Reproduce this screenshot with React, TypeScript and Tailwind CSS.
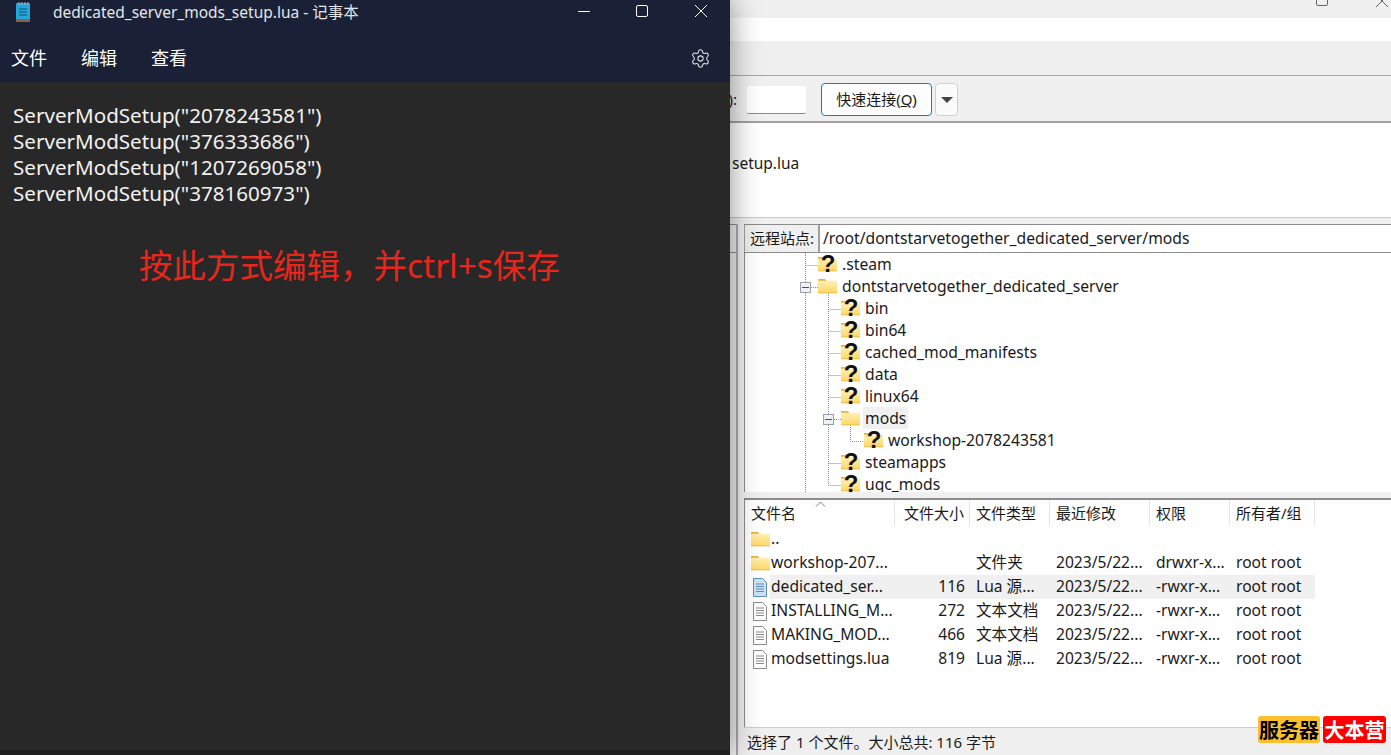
import { Settings } from 'lucide-react';

const ui = 'font-["Noto_Sans","Noto_Sans_CJK_SC",sans-serif]';

const treeRows = [
  { name: '.steam', level: 0, icon: 'unknown' },
  { name: 'dontstarvetogether_dedicated_server', level: 0, icon: 'folder' },
  { name: 'bin', level: 1, icon: 'unknown' },
  { name: 'bin64', level: 1, icon: 'unknown' },
  { name: 'cached_mod_manifests', level: 1, icon: 'unknown' },
  { name: 'data', level: 1, icon: 'unknown' },
  { name: 'linux64', level: 1, icon: 'unknown' },
  { name: 'mods', level: 1, icon: 'folder', active: true },
  { name: 'workshop-2078243581', level: 2, icon: 'unknown' },
  { name: 'steamapps', level: 1, icon: 'unknown' },
  { name: 'ugc_mods', level: 1, icon: 'unknown' },
];

const files = [
  { name: '..', size: '', type: '', date: '', perm: '', owner: '', icon: 'folder' },
  { name: 'workshop-207...', size: '', type: '文件夹', date: '2023/5/22...', perm: 'drwxr-x...', owner: 'root root', icon: 'folder' },
  { name: 'dedicated_ser...', size: '116', type: 'Lua 源...', date: '2023/5/22...', perm: '-rwxr-x...', owner: 'root root', icon: 'lua', selected: true },
  { name: 'INSTALLING_M...', size: '272', type: '文本文档', date: '2023/5/22...', perm: '-rwxr-x...', owner: 'root root', icon: 'text' },
  { name: 'MAKING_MOD...', size: '466', type: '文本文档', date: '2023/5/22...', perm: '-rwxr-x...', owner: 'root root', icon: 'text' },
  { name: 'modsettings.lua', size: '819', type: 'Lua 源...', date: '2023/5/22...', perm: '-rwxr-x...', owner: 'root root', icon: 'plain' },
];

function NotepadIcon() {
  return (
    <svg width="18" height="22" viewBox="0 0 18 22">
      <rect x="2" y="2" width="14" height="18" rx="1" fill="#27a7d8" />
      <rect x="2" y="18" width="14" height="3" fill="#8a6242" />
      <path d="M5 1v3M8 1v3M11 1v3M14 1v3" stroke="#9fb4c4" strokeWidth="1" />
      <path d="M5 8h8M5 11h8M5 14h8" stroke="#0f4f7a" strokeWidth="1.2" />
    </svg>
  );
}

function FolderIcon({ size = 19 }: { size?: number }) {
  return (
    <svg width={size} height={size * 0.8} viewBox="0 0 20 16">
      <defs>
        <linearGradient id="folderBody" x1="0" y1="0" x2="0" y2="1">
          <stop offset="0" stopColor="#fff3bd" />
          <stop offset="1" stopColor="#ffd766" />
        </linearGradient>
      </defs>
      <path d="M0 1h7l2 2h11v13H0z" fill="url(#folderBody)" />
      <path d="M0 1h7l2 2H0z" fill="#e8b33e" />
      <path d="M0 15h20v1H0z" fill="#eebf52" />
    </svg>
  );
}

function UnknownFolderIcon() {
  return (
    <span className="relative flex h-[22px] w-5 shrink-0 items-center">
      <FolderIcon />
      <span className='absolute inset-0 text-center font-["Liberation_Sans",sans-serif] text-[24px] font-bold leading-[22px] text-[#111]'>?</span>
    </span>
  );
}

function DocIcon({ kind }: { kind: string }) {
  const fill = kind === 'lua' ? '#cfe2f3' : '#ffffff';
  const stroke = kind === 'lua' ? '#5b8db8' : '#8a8a8a';
  return (
    <svg width="16" height="19" viewBox="0 0 16 19">
      <path d="M1.500.5h9l4 4v14h-13z" fill={fill} stroke={stroke} />
      <path d="M4 6h8M4 8.500h8M4 11h8M4 13.500h8" stroke={stroke} strokeWidth="1" />
    </svg>
  );
}

function ExpandBox({ className }: { className: string }) {
  return (
    <span className={`absolute flex h-[11px] w-[11px] items-center justify-center border border-[#9aa3ad] bg-[#eef0f3] ${className}`}>
      <span className="h-px w-[7px] bg-[#4a5563]" />
    </span>
  );
}

function TreeGuides() {
  return (
    <svg className="absolute left-0 top-0" width="140" height="239">
      <g stroke="#8a8a8a" strokeDasharray="1 1" fill="none">
        <path d="M60.500 0V239" />
        <path d="M60.500 12.500H73" />
        <path d="M66 34.500H73" />
        <path d="M83.500 40V232.500" />
        <path d="M83.500 56.500H96M83.500 78.500H96M83.500 100.500H96M83.500 122.500H96M83.500 144.500H96M83.500 210.500H96M83.500 232.500H96" />
        <path d="M89 166.500H96" />
        <path d="M105.500 172V188.500H119" />
      </g>
    </svg>
  );
}

function TreeRow({ row }: { row: (typeof treeRows)[number] }) {
  const indent = ['pl-[73px]', 'pl-[96px]', 'pl-[119px]'][row.level];
  return (
    <div className={`relative flex h-[22px] items-center ${indent}`}>
      {row.icon === 'folder' ? <span className="w-5 shrink-0"><FolderIcon /></span> : <UnknownFolderIcon />}
      <span className={`ml-[2px] px-[2px] leading-[22px] ${row.active ? 'bg-[#f0f0f0]' : ''}`}>{row.name}</span>
    </div>
  );
}

export default function App() {
  return (
    <div className={`flex h-[755px] w-[1391px] overflow-hidden bg-[#f0f0f0] ${ui}`}>
      {/* Notepad window */}
      <div className="relative z-10 flex w-[730px] shrink-0 flex-col bg-[#282828] shadow-[0_0_28px_rgba(0,0,0,0.45)]">
        <div className="flex h-[82px] flex-col bg-[#1a2035] text-white">
          <div className="flex h-[37px] items-start">
            <span className="ml-[14px] mt-px"><NotepadIcon /></span>
            <span className="ml-[21px] mt-[2px] text-[15.500px] leading-[20px] text-[#e4e6ea]">dedicated_server_mods_setup.lua - 记事本</span>
            <div className="ml-auto flex">
              <span className="flex h-[22px] w-[58px] items-center justify-center">
                <span className="h-px w-[12px] bg-white" />
              </span>
              <span className="flex h-[22px] w-[58px] items-center justify-center">
                <span className="h-[12px] w-[12px] rounded-[2px] border border-white" />
              </span>
              <span className="flex h-[22px] w-[59px] items-center justify-center">
                <svg width="14" height="14" viewBox="0 0 14 14"><path d="M1 1l12 12M13 1L1 13" stroke="#fff" strokeWidth="1" /></svg>
              </span>
            </div>
          </div>
          <div className="flex h-[45px] items-center pb-[3px] text-[18px]">
            <span className="ml-[11px]">文件</span>
            <span className="ml-[34px]">编辑</span>
            <span className="ml-[34px]">查看</span>
            <Settings className="ml-auto mr-[19px] h-[21px] w-[21px] text-[#dfe3ea]" strokeWidth={1.2} />
          </div>
        </div>
        <div className="px-[13px] pt-[20px] text-[20.600px] leading-[26px] text-[#f2f2f2]">
          <p>ServerModSetup("2078243581")</p>
          <p>ServerModSetup("376333686")</p>
          <p>ServerModSetup("1207269058")</p>
          <p>ServerModSetup("378160973")</p>
        </div>
        <p className="mt-[35px] pl-[139px] text-[33.500px] leading-[48px] text-[#e8261c]">按此方式编辑，并ctrl+s保存</p>
        <div className="mt-auto h-[5px] bg-[#1f1f1f]" />
      </div>

      {/* FTP client behind it */}
      <div className="relative flex min-w-0 flex-1 flex-col text-[15px] text-[#1a1a1a]">
        <div className="flex h-[18px] items-start overflow-hidden bg-[#f0f0f0]">
          <span className="ml-[586px] mt-[-6px] h-[12px] w-[12px] rounded-[2px] border border-[#666]" />
          <svg className="ml-[47px] mt-[-6px]" width="14" height="14" viewBox="0 0 14 14"><path d="M1 1l12 12M13 1L1 13" stroke="#666" strokeWidth="1" /></svg>
        </div>
        <div className="h-[23px] bg-white" />
        <div className="h-[35px] border-b border-[#a8a8a8] bg-[#efefef]" />
        <div className="flex h-[47px] items-center border-b-2 border-[#a0a0a0] bg-[#f0f0f0] pt-[2px]">
          <span className="ml-[-20px] w-[27px] text-right text-[15px]">(P):</span>
          <span className="ml-[10px] h-[28px] w-[59px] rounded-[2px] border-b border-[#8a8a8a] bg-white" />
          <button className="ml-[15px] h-[33px] w-[111px] rounded-[4px] border border-[#1a7fb0] bg-[#fdfdfd] text-[15px]">快速连接(<span className="underline">Q</span>)</button>
          <button className="ml-[3px] flex h-[33px] w-[23px] items-center justify-center rounded-[4px] border border-[#d0d0d0] bg-[#fbfbfb]">
            <span className="h-0 w-0 border-x-[6px] border-t-[6px] border-x-transparent border-t-[#444]" />
          </button>
        </div>
        <div className="h-[95px] border-b border-[#c8c8c8] bg-white pl-[2px] pt-[30px] text-[15.500px] leading-[20px]">setup.lua</div>

        <div className="flex min-h-0 flex-1 pt-[6px]">
          <div className="flex w-[14px] shrink-0">
            <div className="w-[8px] border-r-2 border-[#a8a8a8] bg-[#f0f0f0]">
              <div className="h-[29px] border-y border-[#8c8c8c]" />
            </div>
            <div className="flex-1 bg-[#f0f0f0]" />
          </div>
          <div className="flex min-w-0 flex-1 flex-col">
            <div className="flex h-[29px] border-y border-[#8c8c8c]">
              <span className="flex w-[75px] items-center border-x border-[#a0a0a0] bg-[#f0f0f0] pl-[5px] text-[15px]">远程站点:</span>
              <span className="flex flex-1 items-center border-l border-[#a0a0a0] bg-white pl-[3px] text-[15.700px]">/root/dontstarvetogether_dedicated_server/mods</span>
            </div>
            <div className="relative h-[239px] overflow-hidden border-l border-[#8c8c8c] bg-white text-[15.700px]">
              <TreeGuides />
              <ExpandBox className="left-[55px] top-[29px]" />
              <ExpandBox className="left-[78px] top-[161px]" />
              {treeRows.map((row) => <TreeRow key={row.name} row={row} />)}
            </div>
            <div className="h-[6px] bg-[#f0f0f0]" />
            <div className="flex h-[229px] flex-col border-l border-t-2 border-[#8c8c8c] bg-white text-[15.600px]">
              <div className="relative grid h-[27px] grid-cols-[150px_75px_80px_100px_80px_85px] items-center pb-px">
                <svg className="absolute left-[70px] top-[1px]" width="11" height="6" viewBox="0 0 11 6"><path d="M1 5.500l4.500-4.500 4.500 4.500" fill="none" stroke="#777" /></svg>
                {['文件名', '文件大小', '文件类型', '最近修改', '权限', '所有者/组'].map((label, i) => (
                  <span key={label} className={`flex h-full items-center border-r border-[#e5e5e5] text-[15px] ${i === 1 ? 'justify-end pr-[5px]' : 'pl-[6px]'}`}>{label}</span>
                ))}
              </div>
              {files.map((file) => (
                <div key={file.name} className="grid h-[24px] grid-cols-[150px_75px_80px_100px_80px_85px] items-center">
                  <span className="flex h-full items-center pl-[5px]">
                    <span className="flex w-[20px] shrink-0 justify-center">
                      {file.icon === 'folder' ? <FolderIcon /> : <DocIcon kind={file.icon} />}
                    </span>
                    <span className={`flex h-full flex-1 items-center pl-px ${file.selected ? 'bg-[#f0f0f0]' : ''}`}>{file.name}</span>
                  </span>
                  <span className={`flex h-full items-center justify-end pr-[5px] ${file.selected ? 'bg-[#f0f0f0]' : ''}`}>{file.size}</span>
                  <span className={`flex h-full items-center pl-[6px] ${file.selected ? 'bg-[#f0f0f0]' : ''}`}>{file.type}</span>
                  <span className={`flex h-full items-center pl-[6px] ${file.selected ? 'bg-[#f0f0f0]' : ''}`}>{file.date}</span>
                  <span className={`flex h-full items-center pl-[6px] ${file.selected ? 'bg-[#f0f0f0]' : ''}`}>{file.perm}</span>
                  <span className={`flex h-full items-center pl-[6px] ${file.selected ? 'bg-[#f0f0f0]' : ''}`}>{file.owner}</span>
                </div>
              ))}
            </div>
            <div className="flex flex-1 items-center border-t border-[#cfcfcf] bg-[#efefef] pl-[3px] pt-[2px] text-[15px]">选择了 1 个文件。大小总共: 116 字节</div>
          </div>
        </div>

        {/* watermark */}
        <div className='absolute bottom-[12px] right-[5px] flex gap-[3px] font-["Noto_Sans_CJK_SC",sans-serif] text-[20px] font-bold leading-[27px]'>
          <span className="w-[62px] rounded-[3px] bg-[#fdbf2d] text-center text-black">服务器</span>
          <span className="w-[63px] rounded-[3px] bg-[#ff0000] text-center text-white">大本营</span>
        </div>
      </div>
    </div>
  );
}
